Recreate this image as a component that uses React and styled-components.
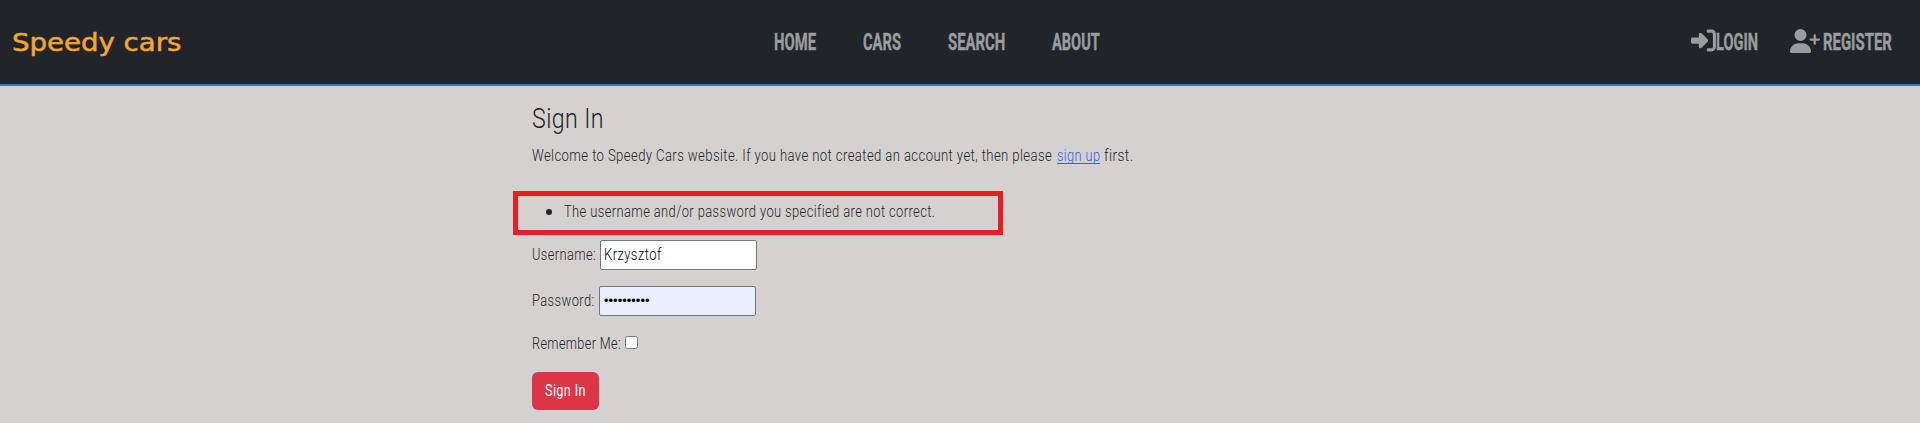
import React, { useLayoutEffect, useRef, useState } from "react";
import styled, { createGlobalStyle } from "styled-components";
import { FaRightToBracket, FaUserPlus } from "react-icons/fa6";

const GlobalStyle = createGlobalStyle`
  * { box-sizing: border-box; }
  body {
    margin: 0;
    background: #d5d1d0;
    color: #212529;
    font-family: Roboto, "Liberation Sans", sans-serif;
    font-size: 16px;
    font-weight: 300;
    line-height: 24px;
  }
`;

const FitBox = styled.span`
  display: inline-block;
  flex: none;
  white-space: pre;
  vertical-align: top;
`;

const FitInner = styled.span`
  display: inline-block;
  transform-origin: left center;
`;

// Condenses or widens its text to a fixed measure.
function Fit({ width, children }) {
  const ref = useRef(null);
  const [scale, setScale] = useState(1);
  useLayoutEffect(() => {
    setScale(width / ref.current.offsetWidth);
  }, [width, children]);
  return (
    <FitBox style={{ width }}>
      <FitInner ref={ref} style={{ transform: `scaleX(${scale})` }}>
        {children}
      </FitInner>
    </FitBox>
  );
}

const Header = styled.header`
  display: flex;
  align-items: center;
  height: 86px;
  padding: 0 28px 0 12px;
  background: #212529;
  border-bottom: 2px solid #2980b9;
`;

const Brand = styled.a`
  width: 170px;
  padding-top: 1px;
  color: #f5a62d;
  font: 400 24px/32px "DejaVu Sans", sans-serif;
  -webkit-text-stroke: 0.5px #f5a62d;
`;

const Nav = styled.nav`
  display: flex;
  gap: 47px;
  margin-left: 592px;
`;

const NavLink = styled.a`
  display: flex;
  align-items: center;
  gap: ${(p) => p.$gap || 0}px;
  color: #9b9c9e;
  font-size: 24px;
  font-weight: 700;
  line-height: 32px;
  margin-top: -1px;
  -webkit-text-stroke: 0.4px #9b9c9e;

  svg { margin-top: -2px; stroke: none; }
`;

const Account = styled.div`
  display: flex;
  gap: 32px;
  margin-left: auto;
`;

const Main = styled.main`
  display: flex;
  flex-direction: column;
  align-items: flex-start;
  padding: 17px 0 0 532px;
  letter-spacing: 0.5px;
`;

const Title = styled.h1`
  margin: 0;
  font-size: 27px;
  font-weight: 300;
  line-height: 32px;
`;

const Intro = styled.p`
  display: flex;
  margin: 9px 0 0;
`;

const SignUp = styled.a`
  height: 20px;
  margin: 0 4px 0 5px;
  color: #2b64e3;
  border-bottom: 1px solid #2b64e3;
`;

const ErrorList = styled.ul`
  display: flex;
  width: 490px;
  height: 44px;
  margin: 23px 0 0 -19px;
  padding: 4px 0 0 28px;
  list-style: none;
  border: 5px solid #ea1c24;
`;

const ErrorItem = styled.li`
  display: flex;
  gap: 12px;

  &::before {
    content: "";
    width: 6px;
    height: 6px;
    margin-top: 9px;
    border-radius: 50%;
    background: #212529;
  }
`;

const Row = styled.label`
  display: flex;
  align-items: center;
  gap: 4px;
  height: ${(p) => p.$height || 30}px;
  margin-top: ${(p) => p.$top}px;
`;

const Field = styled.span`
  display: flex;
  align-items: center;
  width: 157px;
  height: 30px;
  padding-left: ${(p) => (p.$filled ? 4 : 3)}px;
  color: #000;
  background: ${(p) => (p.$filled ? "#e8f0fe" : "#fff")};
  border: 1px solid #767676;
  border-radius: 2px;
`;

const Mask = styled.span`
  font: 400 13px/24px "Liberation Sans", sans-serif;
  letter-spacing: 0;
`;

const Checkbox = styled.input`
  width: 13px;
  height: 13px;
  margin: -3px 0 0;
`;

const Submit = styled.button`
  display: flex;
  align-items: center;
  justify-content: center;
  width: 67px;
  height: 38px;
  margin: 16px 0 0;
  padding: 0;
  color: #fff;
  font: 400 16px/24px Roboto, sans-serif;
  letter-spacing: 0.5px;
  background: #dc3545;
  border: 0;
  border-radius: 6px;
`;

export default function App() {
  return (
    <>
      <GlobalStyle />
      <Header>
        <Brand><Fit width={169}>Speedy cars</Fit></Brand>
        <Nav>
          <NavLink><Fit width={42}>HOME</Fit></NavLink>
          <NavLink><Fit width={38}>CARS</Fit></NavLink>
          <NavLink><Fit width={57}>SEARCH</Fit></NavLink>
          <NavLink><Fit width={48}>ABOUT</Fit></NavLink>
        </Nav>
        <Account>
          <NavLink>
            <FaRightToBracket size={25} />
            <Fit width={42}>LOGIN</Fit>
          </NavLink>
          <NavLink $gap={3}>
            <FaUserPlus style={{ width: 30, height: 24 }} />
            <Fit width={69}>REGISTER</Fit>
          </NavLink>
        </Account>
      </Header>
      <Main>
        <Title><Fit width={72}>Sign In</Fit></Title>
        <Intro>
          <Fit width={520}>
            Welcome to Speedy Cars website. If you have not created an account yet, then please
          </Fit>
          <SignUp><Fit width={43}>sign up</Fit></SignUp>
          <Fit width={29}>first.</Fit>
        </Intro>
        <ErrorList>
          <ErrorItem>
            <Fit width={371}>The username and/or password you specified are not correct.</Fit>
          </ErrorItem>
        </ErrorList>
        <Row $top={5}>
          <Fit width={64}>Username:</Fit>
          <Field><Fit width={58}>Krzysztof</Fit></Field>
        </Row>
        <Row $top={16}>
          <Fit width={63}>Password:</Fit>
          <Field $filled>
            <Mask><Fit width={46}>••••••••••</Fit></Mask>
          </Field>
        </Row>
        <Row $top={16} $height={24}>
          <Fit width={89}>Remember Me:</Fit>
          <Checkbox type="checkbox" />
        </Row>
        <Submit type="button"><Fit width={41}>Sign In</Fit></Submit>
      </Main>
    </>
  );
}
